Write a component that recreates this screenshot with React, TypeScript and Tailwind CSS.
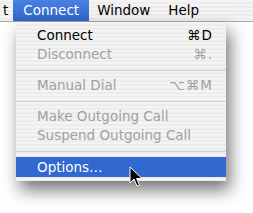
import React from 'react';

type Item =
  | { kind: 'item'; label: string; shortcut?: string; disabled?: boolean; active?: boolean }
  | { kind: 'sep' };

const items: Item[] = [
  { kind: 'item', label: 'Connect', shortcut: '⌘D' },
  { kind: 'item', label: 'Disconnect', shortcut: '⌘.', disabled: true },
  { kind: 'sep' },
  { kind: 'item', label: 'Manual Dial', shortcut: '⌥⌘M', disabled: true },
  { kind: 'sep' },
  { kind: 'item', label: 'Make Outgoing Call', disabled: true },
  { kind: 'item', label: 'Suspend Outgoing Call', disabled: true },
  { kind: 'sep' },
  { kind: 'item', label: 'Options…', active: true },
];

const stripes =
  'bg-[repeating-linear-gradient(180deg,#f4f4f4_0px,#f4f4f4_2px,#ececec_2px,#ececec_4px)]';

function Cursor() {
  return (
    <svg className="absolute left-[129px] top-[166px]" width="14" height="22" viewBox="0 0 14 22">
      <path
        d="M1 1 L1 17 L5 13 L8 20 L10.5 19 L7.5 12.5 L13 12.5 Z"
        fill="#000"
        stroke="#fff"
        strokeWidth="1"
        strokeLinejoin="round"
      />
    </svg>
  );
}

export default function App() {
  return (
    <div
      className="relative w-[253px] h-[213px] overflow-hidden bg-white text-[13.5px] text-black"
      style={{ fontFamily: '"DejaVu Sans", "Liberation Sans", sans-serif' }}
    >
      <div className={`flex h-[22px] items-center border-b border-[#a8a8a8] ${stripes}`}>
        <span className="pl-[3px] pr-[5px]">t</span>
        <span className="flex h-[21px] items-center bg-gradient-to-b from-[#4a80e0] to-[#2f66cc] px-[10px] text-white">
          Connect
        </span>
        <span className="pl-[8px] pr-[18px]">Window</span>
        <span>Help</span>
      </div>

      <div
        className={`absolute left-[16px] top-[22px] w-[210px] py-[4px] ${stripes} shadow-[4px_9px_16px_rgba(0,0,0,0.55)]`}
      >
        {items.map((it, i) =>
          it.kind === 'sep' ? (
            <div key={i} className="flex h-[12px] items-center">
              <div className="h-px w-full bg-[#d2d2d2]" />
            </div>
          ) : (
            <div
              key={i}
              className={`flex items-center justify-between pl-[21px] pr-[13px] ${
                it.active ? 'h-[20px] bg-[#3169d0] text-white' : 'h-[19px]'
              } ${it.disabled ? 'text-[#a0a0a0]' : ''}`}
            >
              <span>{it.label}</span>
              {it.shortcut && <span className="tracking-[1px]">{it.shortcut}</span>}
            </div>
          )
        )}
      </div>

      <Cursor />
    </div>
  );
}
